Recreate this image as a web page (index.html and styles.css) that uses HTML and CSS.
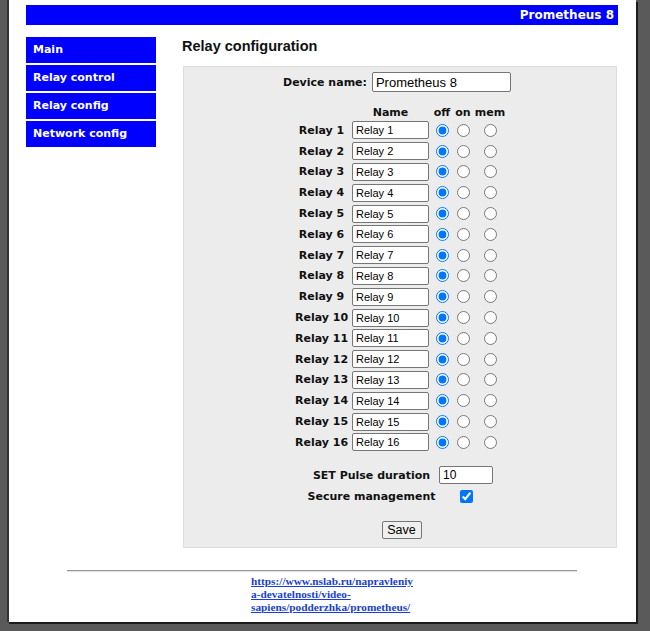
FILE: index.html
```html
<!DOCTYPE html>
<html>
<head>
<meta charset="utf-8">
<title>Relay configuration</title>
<link rel="stylesheet" href="styles.css">
</head>
<body>
<div class="window">
  <div class="topbar">Prometheus 8</div>
  <div class="layout">
    <nav class="nav">
      <a class="nav-item" href="#">Main</a>
      <a class="nav-item" href="#">Relay control</a>
      <a class="nav-item" href="#">Relay config</a>
      <a class="nav-item" href="#">Network config</a>
    </nav>
    <main class="content">
      <h2 class="title">Relay configuration</h2>
      <form class="panel">
        <div class="device-row">
          <label class="lbl">Device name:</label>
          <input class="device-input" type="text" value="Prometheus 8">
        </div>
        <div class="relays" id="relays">
          <div></div>
          <div class="lbl">Name</div>
          <div class="lbl">off</div>
          <div class="lbl">on</div>
          <div class="lbl">mem</div>
        </div>
        <div class="extra">
          <div class="lbl">SET Pulse duration</div>
          <input class="pulse-input" type="text" value="10">
          <div class="lbl">Secure management</div>
          <input class="chk" type="checkbox" checked>
        </div>
        <div class="save-row"><button class="save" type="button">Save</button></div>
      </form>
    </main>
  </div>
  <hr class="rule">
  <div class="footer"><a class="link" href="#">https://www.nslab.ru/napravleniya-devatelnosti/video-sapiens/podderzhka/prometheus/</a></div>
</div>
<script>
(function () {
  var t = document.getElementById('relays');
  var html = '';
  for (var i = 1; i <= 16; i++) {
    html += '<div class="lbl">Relay ' + i + '</div>' +
      '<input class="relay-input" type="text" value="Relay ' + i + '">' +
      '<input class="rad" type="radio" name="r' + i + '" checked>' +
      '<input class="rad" type="radio" name="r' + i + '">' +
      '<input class="rad" type="radio" name="r' + i + '">';
  }
  t.insertAdjacentHTML('beforeend', html);
})();
</script>
</body>
</html>
```
FILE: styles.css
```css
html, body {
  margin: 0;
  padding: 0;
}
body {
  background: #5a5a5a;
  width: 650px;
  height: 631px;
  overflow: hidden;
}
.window {
  margin-left: 7px;
  border-left: 2px solid #333;
  width: 627px;
  height: 622px;
  background: #fff;
  box-shadow: 2px 2px 0 #1c1c1c;
  overflow: hidden;
  font-family: "DejaVu Sans", Verdana, sans-serif;
}
.topbar {
  margin: 5px 0 0 17px;
  width: 588px;
  height: 20px;
  padding-right: 4px;
  background: #0000ff;
  color: #fff;
  font-weight: bold;
  font-size: 12px;
  line-height: 20px;
  text-align: right;
}
.layout {
  display: flex;
  margin: 12px 0 0 17px;
}
.nav {
  width: 130px;
  display: flex;
  flex-direction: column;
  gap: 2px;
}
.nav-item {
  display: block;
  height: 26px;
  line-height: 26px;
  padding-left: 7px;
  background: #0000ff;
  color: #fff;
  font-weight: bold;
  font-size: 11px;
  text-decoration: none;
}
.content {
  margin-left: 26px;
  width: 436px;
}
.title {
  margin: 0;
  font-family: "Liberation Sans", Arial, sans-serif;
  font-size: 14.5px;
  line-height: 18px;
  font-weight: bold;
  color: #111;
}
.panel {
  margin: 11px 0 0 1px;
  width: 432px;
  height: 475px;
  border: 1px solid #dcdcdc;
  background: #ececec;
  padding-top: 5px;
  box-sizing: content-box;
}
.lbl {
  font-weight: bold;
  font-size: 11px;
  color: #111;
  white-space: nowrap;
  text-align: center;
}
.device-row {
  display: flex;
  justify-content: center;
  align-items: center;
  gap: 5px;
  height: 20px;
  padding-right: 6px;
}
input[type=text] {
  font-family: "Liberation Sans", Arial, sans-serif;
  color: #000;
  border: 1px solid #767676;
  border-radius: 2px;
  background: #fff;
  box-sizing: border-box;
  margin: 0;
  padding: 0 3px;
}
.device-input {
  width: 139px;
  height: 20px;
  font-size: 13px;
}
.relays {
  display: grid;
  grid-template-columns: 57px 81px 22px 20px 34px;
  grid-template-rows: 16px;
  grid-auto-rows: 20.8px;
  align-items: center;
  justify-items: center;
  width: max-content;
  margin: 12px auto 0;
}
.relay-input {
  width: 77px;
  height: 18px;
  font-size: 11px;
}
.rad {
  margin: 0;
  width: 13px;
  height: 13px;
}
.extra {
  display: grid;
  grid-template-columns: 132px 57px;
  grid-auto-rows: 21px;
  align-items: center;
  justify-items: center;
  width: max-content;
  margin: 12px auto 0;
}
.pulse-input {
  width: 54px;
  height: 18px;
  font-size: 12px;
}
.chk {
  margin: 0;
  width: 13px;
  height: 13px;
}
.save-row {
  display: flex;
  justify-content: center;
  margin-top: 14px;
}
.save {
  width: 40px;
  height: 18px;
  padding: 0;
  margin-left: 3px;
  font-family: "Liberation Sans", Arial, sans-serif;
  font-size: 12.5px;
  color: #000;
  background: #efefef;
  border: 1px solid #767676;
  border-radius: 2px;
}
.rule {
  width: 510px;
  margin: 22px 0 0 58px;
  border: 0;
  border-top: 1px solid #9a9a9a;
  border-bottom: 1px solid #e0e0e0;
  height: 0;
}
.footer {
  margin: 3px 0 0 242px;
  width: 163px;
  font-family: "Liberation Serif", "Times New Roman", serif;
  font-size: 11.3px;
  font-weight: bold;
  line-height: 13px;
  overflow-wrap: break-word;
}
.link {
  color: #1a3fd0;
  text-decoration: underline;
}
```
